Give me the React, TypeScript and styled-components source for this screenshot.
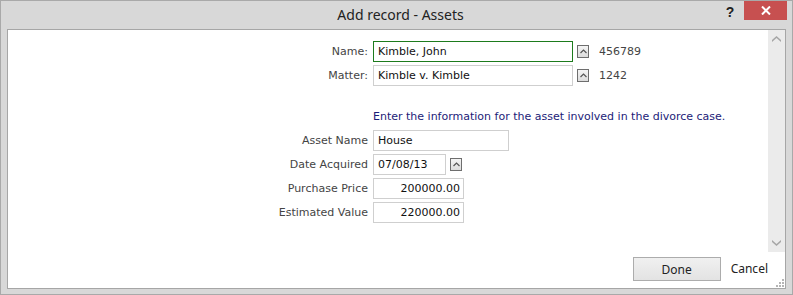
import styled, { createGlobalStyle } from "styled-components";

const Global = createGlobalStyle`
  html, body {
    margin: 0;
    padding: 0;
    background: #ffffff;
  }
`;

const Window = styled.div`
  width: 793px;
  height: 295px;
  box-sizing: border-box;
  border: 1px solid #a9a9a9;
  background: #d8d8d8;
  display: flex;
  flex-direction: column;
  padding: 0 6px 5px 6px;
`;

const TitleBar = styled.div`
  height: 28px;
  flex: none;
  display: flex;
  align-items: flex-start;
  position: relative;
`;

const Title = styled.div`
  flex: 1;
  text-align: center;
  font-family: "Noto Sans", "Open Sans", sans-serif;
  font-size: 14px;
  color: #222;
  line-height: 28px;
  padding-left: 8px;
`;

const TitleButtons = styled.div`
  position: absolute;
  right: -1px;
  top: 0;
  display: flex;
  align-items: flex-start;
`;

const HelpButton = styled.div`
  width: 28px;
  height: 20px;
  font-family: "Liberation Sans", sans-serif;
  font-weight: bold;
  font-size: 14px;
  color: #222;
  text-align: center;
  line-height: 22px;
`;

const CloseButton = styled.div`
  width: 43px;
  height: 19px;
  background: #c75050;
  display: flex;
  align-items: center;
  justify-content: center;
`;

const Panel = styled.div`
  flex: 1;
  background: #ffffff;
  border: 1px solid #a6a6a6;
  display: flex;
  flex-direction: column;
  min-height: 0;
`;

const ScrollArea = styled.div`
  height: 222px;
  display: flex;
`;

const FormBody = styled.div`
  flex: 1;
  padding-top: 11px;
  display: flex;
  flex-direction: column;
  gap: 3px;
  font-family: "DejaVu Sans", sans-serif;
  font-size: 11px;
`;

const Row = styled.div<{ $spaced?: boolean }>`
  display: flex;
  align-items: center;
  height: 21px;
  margin-top: ${(p) => (p.$spaced ? "17px" : "0")};
`;

const Label = styled.div`
  width: 365px;
  flex: none;
  text-align: right;
  color: #444;
  padding-right: 5px;
  box-sizing: border-box;
  white-space: nowrap;
`;

const Input = styled.div<{ $w: number; $focus?: boolean; $right?: boolean }>`
  width: ${(p) => p.$w}px;
  height: 21px;
  box-sizing: border-box;
  border: 1px solid ${(p) => (p.$focus ? "#1d7b1d" : "#cfcfcf")};
  color: #111;
  display: flex;
  align-items: center;
  justify-content: ${(p) => (p.$right ? "flex-end" : "flex-start")};
  padding: 0 3px 0 4px;
  white-space: nowrap;
`;

const PickButton = styled.div`
  width: 12px;
  height: 13px;
  box-sizing: border-box;
  border: 1px solid #6e6e6e;
  background: linear-gradient(#f4f4f4, #dcdcdc);
  margin-left: 4px;
  display: flex;
  align-items: center;
  justify-content: center;
`;

const Code = styled.div`
  margin-left: 10px;
  color: #444;
`;

const Info = styled.div`
  padding-left: 365px;
  color: #1c1c78;
  white-space: nowrap;
`;

const ScrollBar = styled.div`
  width: 17px;
  background: #ebebeb;
  display: flex;
  flex-direction: column;
  justify-content: space-between;
  align-items: center;
  padding: 6px 0;
  box-sizing: border-box;
`;

const Footer = styled.div`
  flex: 1;
  display: flex;
  justify-content: flex-end;
  align-items: flex-start;
  padding-top: 5px;
  padding-right: 17px;
  position: relative;
  font-family: "Noto Sans", "Open Sans", sans-serif;
  font-size: 12px;
`;

const DoneButton = styled.div`
  width: 88px;
  height: 24px;
  box-sizing: border-box;
  border: 1px solid #acacac;
  background: linear-gradient(#f0f0f0, #e3e3e3);
  color: #222;
  display: flex;
  align-items: center;
  justify-content: center;
`;

const CancelLink = styled.div`
  margin-left: 10px;
  height: 24px;
  line-height: 24px;
  color: #222;
`;

const Grip = styled.svg`
  position: absolute;
  right: 1px;
  bottom: 1px;
`;

function Chevron({ color = "#555" }: { color?: string }) {
  return (
    <svg width="7" height="5" viewBox="0 0 7 5">
      <polyline points="0.5,4 3.5,1 6.5,4" fill="none" stroke={color} strokeWidth="1.2" />
    </svg>
  );
}

function ScrollArrow({ down }: { down?: boolean }) {
  return (
    <svg width="9" height="6" viewBox="0 0 9 6">
      <polygon
        points={down ? "0,0 4.5,4 9,0 9,2 4.5,6 0,2" : "0,6 4.5,2 9,6 9,4 4.5,0 0,4"}
        fill="#a6a6a6"
      />
    </svg>
  );
}

export default function App() {
  return (
    <>
      <Global />
      <Window>
        <TitleBar>
          <Title>Add record - Assets</Title>
          <TitleButtons>
            <HelpButton>?</HelpButton>
            <CloseButton>
              <svg width="10" height="9" viewBox="0 0 10 9">
                <path d="M1 0.5 L9 8.5 M9 0.5 L1 8.5" stroke="#fff" strokeWidth="2" />
              </svg>
            </CloseButton>
          </TitleButtons>
        </TitleBar>
        <Panel>
          <ScrollArea>
            <FormBody>
              <Row>
                <Label>Name:</Label>
                <Input $w={200} $focus>Kimble, John</Input>
                <PickButton>
                  <Chevron />
                </PickButton>
                <Code>456789</Code>
              </Row>
              <Row>
                <Label>Matter:</Label>
                <Input $w={200}>Kimble v. Kimble</Input>
                <PickButton>
                  <Chevron />
                </PickButton>
                <Code>1242</Code>
              </Row>
              <Row $spaced>
                <Info>Enter the information for the asset involved in the divorce case.</Info>
              </Row>
              <Row>
                <Label>Asset Name</Label>
                <Input $w={136}>House</Input>
              </Row>
              <Row>
                <Label>Date Acquired</Label>
                <Input $w={73}>07/08/13</Input>
                <PickButton>
                  <Chevron />
                </PickButton>
              </Row>
              <Row>
                <Label>Purchase Price</Label>
                <Input $w={91} $right>200000.00</Input>
              </Row>
              <Row>
                <Label>Estimated Value</Label>
                <Input $w={91} $right>220000.00</Input>
              </Row>
            </FormBody>
            <ScrollBar>
              <ScrollArrow />
              <ScrollArrow down />
            </ScrollBar>
          </ScrollArea>
          <Footer>
            <DoneButton>Done</DoneButton>
            <CancelLink>Cancel</CancelLink>
            <Grip width="8" height="8" viewBox="0 0 8 8">
              <rect x="6" y="0" width="2" height="2" fill="#b5b5b5" />
              <rect x="3" y="3" width="2" height="2" fill="#b5b5b5" />
              <rect x="6" y="3" width="2" height="2" fill="#b5b5b5" />
              <rect x="0" y="6" width="2" height="2" fill="#b5b5b5" />
              <rect x="3" y="6" width="2" height="2" fill="#b5b5b5" />
              <rect x="6" y="6" width="2" height="2" fill="#b5b5b5" />
            </Grip>
          </Footer>
        </Panel>
      </Window>
    </>
  );
}
